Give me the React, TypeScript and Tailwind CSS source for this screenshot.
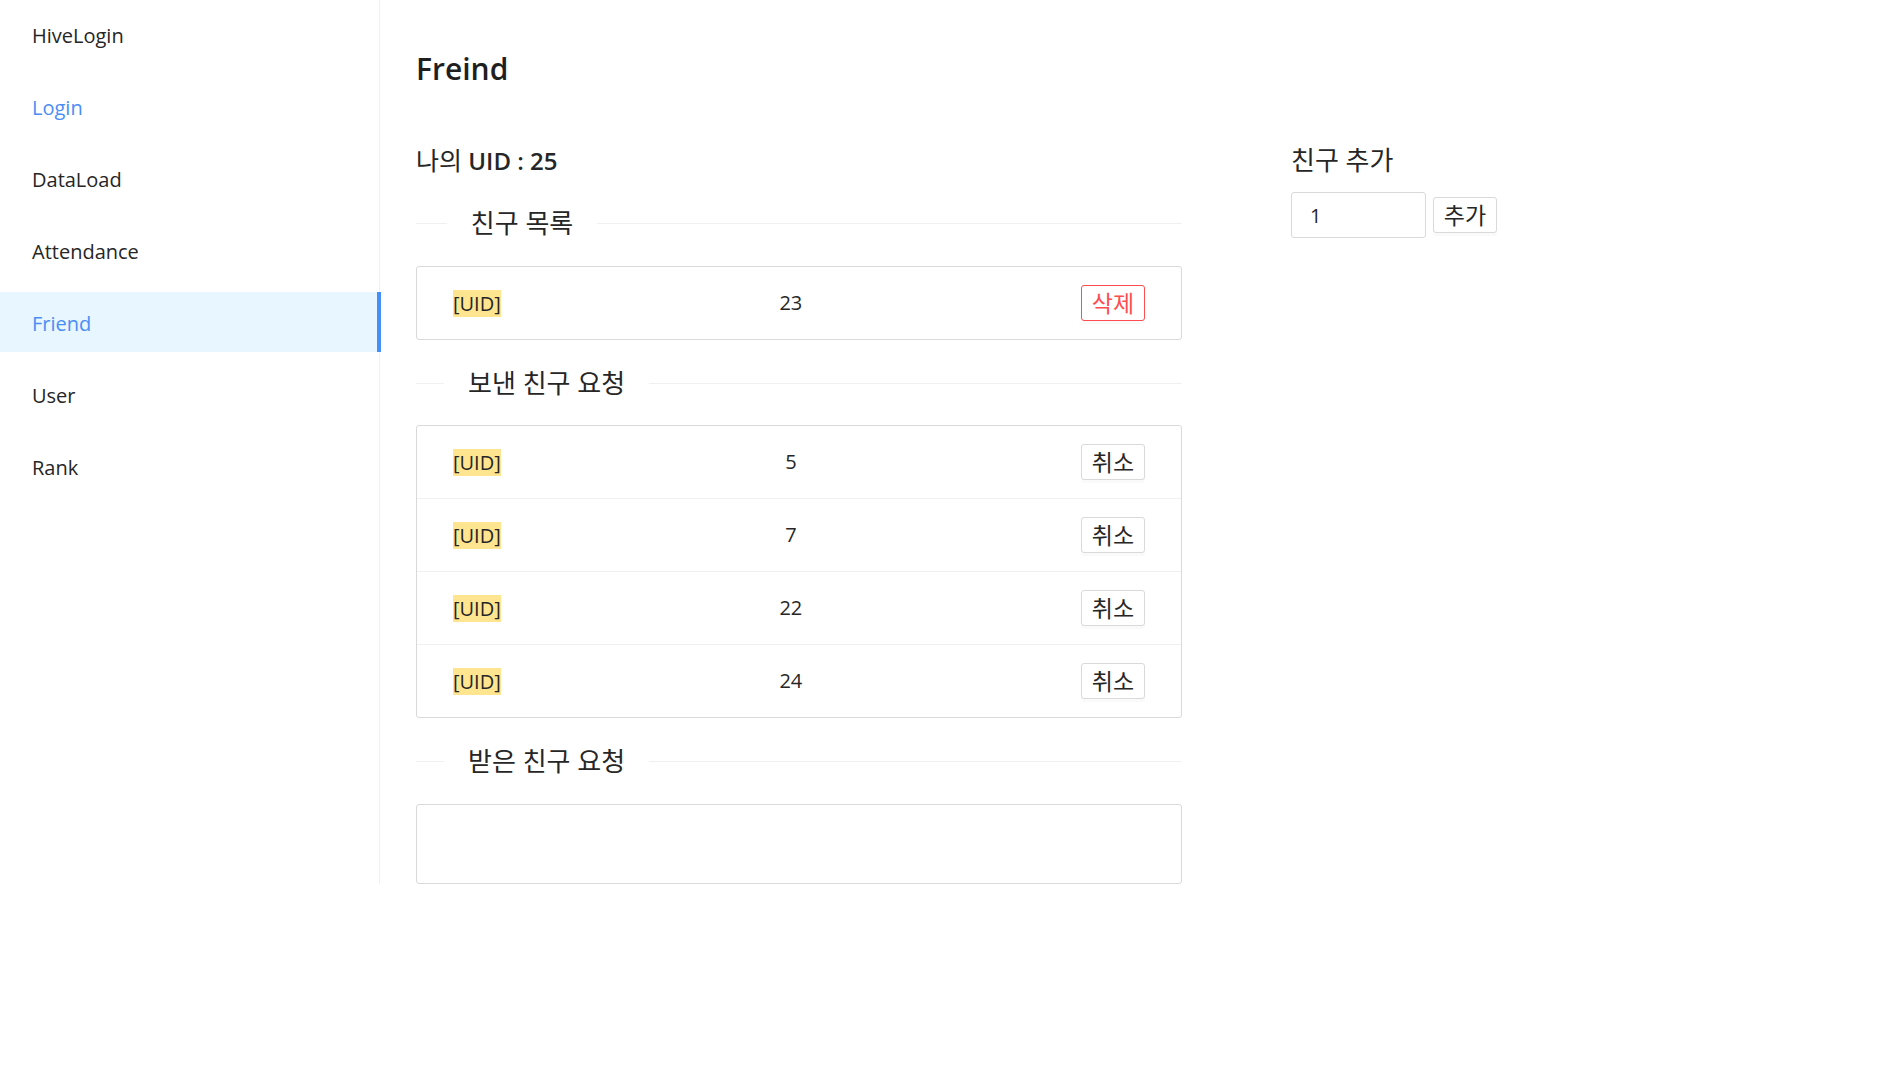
import React from "react";

const FONT = { fontFamily: '"Open Sans", "Noto Sans CJK KR", sans-serif' };

const menu = ["HiveLogin", "Login", "DataLoad", "Attendance", "Friend", "User", "Rank"];

function Divider({ text }: { text: string }) {
  return (
    <div className="flex items-center h-[36px] w-full">
      <div className="basis-[5%] h-px bg-[#f0f0f0]" />
      <span className="shrink-0 px-[24px] text-[26px] leading-[36px] text-[#262626] whitespace-nowrap">{text}</span>
      <div className="basis-[95%] h-px bg-[#f0f0f0]" />
    </div>
  );
}

function Row({ value, action, danger, last }: { value: string; action: string; danger?: boolean; last?: boolean }) {
  return (
    <div className={`flex items-center justify-between px-[36px] ${last ? "h-[72px]" : "h-[73px] border-b border-[#f0f0f0]"}`}>
      <span className="bg-[#ffe58f] text-[20px] leading-[27px] text-[#262626]">[UID]</span>
      <span className="text-[20px] text-[#262626]">{value}</span>
      <button
        className={`w-[64px] h-[36px] rounded-[3px] border bg-white text-[23px] leading-none shadow-[0_3px_0_rgba(0,0,0,0.02)] ${
          danger ? "border-[#ff4d4f] text-[#ff4d4f]" : "border-[#d9d9d9] text-[#262626]"
        }`}
      >
        {action}
      </button>
    </div>
  );
}

export default function App() {
  return (
    <div className="w-[1881px] min-h-[1079px] bg-white" style={FONT}>
      <div className="flex items-stretch">
        <aside className="w-[380px] shrink-0 border-r border-[#f0f0f0] pt-[4px]">
          <nav className="flex flex-col gap-[12px]">
            {menu.map((m) => {
              const active = m === "Friend";
              const link = m === "Login";
              return (
                <div
                  key={m}
                  className={`h-[60px] flex items-center pl-[32px] pt-[4px] text-[20px] ${
                    active
                      ? "w-[381px] bg-[#e8f6ff] border-r-4 border-[#4590f7] text-[#4a8ef5]"
                      : link
                      ? "text-[#4a8ef5]"
                      : "text-[#262626]"
                  }`}
                >
                  {m}
                </div>
              );
            })}
          </nav>
        </aside>

        <main className="flex-1 pl-[36px] pt-[45px]">
          <h2 className="h-[48px] leading-[48px] text-[30px] font-semibold text-[#1f1f1f]">Freind</h2>
          <div className="flex mt-[51px]">
            <div className="w-[766px] shrink-0">
              <h4 className="h-[36px] leading-[32px] text-[24px] font-semibold text-[#262626]">
                <span className="font-normal text-[25px]">나의</span> UID : 25
              </h4>
              <div className="mt-[25px]">
                <Divider text="친구 목록" />
              </div>
              <div className="mt-[25px] border border-[#d9d9d9] rounded-[3px]">
                <Row value="23" action="삭제" danger last />
              </div>
              <div className="mt-[25px]">
                <Divider text="보낸 친구 요청" />
              </div>
              <div className="mt-[24px] border border-[#d9d9d9] rounded-[3px]">
                <Row value="5" action="취소" />
                <Row value="7" action="취소" />
                <Row value="22" action="취소" />
                <Row value="24" action="취소" last />
              </div>
              <div className="mt-[25px]">
                <Divider text="받은 친구 요청" />
              </div>
              <div className="mt-[25px] h-[80px] border border-[#d9d9d9] rounded-[3px]" />
            </div>

            <div className="ml-[109px]">
              <h4 className="h-[32px] leading-[32px] text-[26px] text-[#262626]">친구 추가</h4>
              <div className="mt-[16px] flex items-center">
                <input
                  defaultValue="1"
                  className="w-[135px] h-[46px] border border-[#d9d9d9] rounded-[3px] pl-[18px] text-[20px] text-[#262626] outline-none"
                />
                <button className="ml-[7px] w-[64px] h-[36px] rounded-[3px] border border-[#d9d9d9] bg-white text-[23px] leading-none text-[#262626] shadow-[0_3px_0_rgba(0,0,0,0.02)]">
                  추가
                </button>
              </div>
            </div>
          </div>
        </main>
      </div>
    </div>
  );
}
